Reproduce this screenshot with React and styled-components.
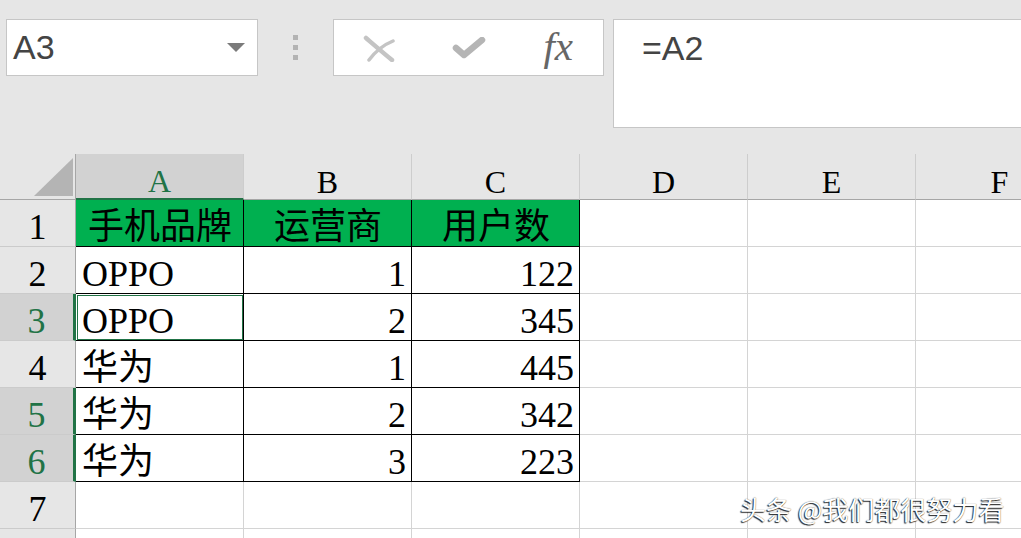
import React from "react";
import styled, { createGlobalStyle } from "styled-components";

const GlobalStyle = createGlobalStyle`
  html, body {
    margin: 0;
    padding: 0;
    background: #e6e6e6;
  }
`;

const columns = ["A", "B", "C", "D", "E", "F"];

const rows = [
  { cells: ["手机品牌", "运营商", "用户数"], head: true },
  { cells: ["OPPO", 1, 122] },
  { cells: ["OPPO", 2, 345] },
  { cells: ["华为", 1, 445] },
  { cells: ["华为", 2, 342] },
  { cells: ["华为", 3, 223] },
  { cells: [] },
  { cells: [], hideLabel: true },
];

const selectedRows = [3, 5, 6];
const activeRow = 3;

export default function App() {
  return (
    <Page>
      <GlobalStyle />
      <FormulaBar>
        <NameBox>
          A3
          <Caret />
        </NameBox>
        <Splitter>
          <Dot />
          <Dot />
          <Dot />
        </Splitter>
        <FnBox>
          <FnSlot>
            <svg width="32" height="28" viewBox="0 0 32 28">
              <path d="M3 4 C10 10 18 17 29 26" stroke="#c4c4c4" strokeWidth="4.5" strokeLinecap="round" fill="none" />
              <path d="M30 7 C20 11 12 18 6 26" stroke="#c4c4c4" strokeWidth="3.5" strokeLinecap="round" fill="none" />
            </svg>
          </FnSlot>
          <FnSlot>
            <svg width="34" height="22" viewBox="0 0 34 22">
              <polyline points="4,11 12,18 30,3" stroke="#b5b5b5" strokeWidth="6.5" strokeLinecap="round" strokeLinejoin="round" fill="none" />
            </svg>
          </FnSlot>
          <FnSlot>
            <FxLabel>fx</FxLabel>
          </FnSlot>
        </FnBox>
        <FormulaInput>=A2</FormulaInput>
      </FormulaBar>

      <Sheet>
        <Corner>
          <svg width="39" height="38" viewBox="0 0 39 38">
            <polygon points="39,0 39,38 0,38" fill="#b4b4b4" />
          </svg>
        </Corner>
        {columns.map((c) => (
          <ColHead key={c} $active={c === "A"}>
            {c}
          </ColHead>
        ))}
        {rows.map((row, r) => {
          const n = r + 1;
          return (
            <React.Fragment key={n}>
              <RowHead $active={selectedRows.includes(n)}>{row.hideLabel ? null : n}</RowHead>
              {columns.map((c, ci) => {
                const value = row.cells[ci];
                const boxed = n <= 6 && ci < 3;
                const align = row.head ? "center" : typeof value === "number" ? "flex-end" : "flex-start";
                return (
                  <Cell
                    key={c}
                    $boxed={boxed}
                    $fill={row.head && ci < 3 ? "#00b050" : undefined}
                    $align={align}
                    $active={n === activeRow && ci === 0}
                  >
                    {value}
                  </Cell>
                );
              })}
            </React.Fragment>
          );
        })}
      </Sheet>

      <Watermark>头条 @我们都很努力看</Watermark>
    </Page>
  );
}

const Page = styled.div`
  position: relative;
  width: 1021px;
  height: 538px;
  overflow: hidden;
  background: #e6e6e6;
`;

const FormulaBar = styled.div`
  display: flex;
  align-items: flex-start;
  box-sizing: border-box;
  height: 154px;
  padding: 19px 0 0 6px;
  font-family: "Liberation Sans", Arial, sans-serif;
  color: #444;
`;

const NameBox = styled.div`
  box-sizing: border-box;
  display: flex;
  align-items: center;
  justify-content: space-between;
  width: 252px;
  height: 57px;
  padding: 0 12px 0 6px;
  background: #fff;
  border: 1px solid #c6c6c6;
  font-size: 34px;
`;

const Caret = styled.span`
  width: 0;
  height: 0;
  border-left: 9px solid transparent;
  border-right: 9px solid transparent;
  border-top: 9px solid #7b7b7b;
`;

const Splitter = styled.div`
  display: flex;
  flex-direction: column;
  align-items: center;
  justify-content: center;
  gap: 5px;
  width: 75px;
  height: 57px;
`;

const Dot = styled.span`
  width: 5px;
  height: 5px;
  background: #b3b3b3;
`;

const FnBox = styled.div`
  box-sizing: border-box;
  display: flex;
  width: 271px;
  height: 57px;
  background: #fff;
  border: 1px solid #c6c6c6;
`;

const FnSlot = styled.div`
  flex: 1;
  display: flex;
  align-items: center;
  justify-content: center;
`;

const FxLabel = styled.span`
  font-family: "Liberation Serif", serif;
  font-style: italic;
  font-size: 41px;
  color: #666;
  line-height: 1;
  margin-top: -2px;
`;

const FormulaInput = styled.div`
  flex: 1;
  box-sizing: border-box;
  height: 109px;
  margin-left: 9px;
  padding: 9px 0 0 28px;
  background: #fff;
  border: 1px solid #c6c6c6;
  border-right: none;
  font-size: 34px;
  line-height: 38px;
`;

const Sheet = styled.div`
  display: grid;
  grid-template-columns: 76px repeat(6, 168px);
  grid-template-rows: 46px repeat(8, 47px);
  font-family: "Liberation Serif", "Noto Sans CJK SC", serif;
  color: #000;
`;

const Corner = styled.div`
  box-sizing: border-box;
  display: flex;
  align-items: flex-end;
  justify-content: flex-end;
  padding: 0 2px 3px 0;
  background: #e6e6e6;
  border-right: 1px solid #a6a6a6;
  border-bottom: 1px solid #a6a6a6;
`;

const ColHead = styled.div`
  box-sizing: border-box;
  display: flex;
  align-items: flex-end;
  justify-content: center;
  padding-bottom: 1px;
  background: ${(p) => (p.$active ? "#d2d2d2" : "#e6e6e6")};
  color: ${(p) => (p.$active ? "#217346" : "#000")};
  border-right: 1px solid #cdcdcd;
  border-bottom: ${(p) => (p.$active ? "2px solid #217346" : "1px solid #a6a6a6")};
  font-size: 32px;
  line-height: 1;
`;

const RowHead = styled.div`
  box-sizing: border-box;
  display: flex;
  align-items: flex-end;
  justify-content: center;
  padding-bottom: 1px;
  background: ${(p) => (p.$active ? "#d2d2d2" : "#e6e6e6")};
  color: ${(p) => (p.$active ? "#217346" : "#000")};
  border-right: ${(p) => (p.$active ? "3px solid #217346" : "1px solid #a6a6a6")};
  border-bottom: 1px solid #cbcbcb;
  font-size: 36px;
  line-height: 1;
`;

const Cell = styled.div`
  box-sizing: border-box;
  display: flex;
  align-items: flex-end;
  justify-content: ${(p) => p.$align};
  padding: 0 5px 1px 6px;
  background: ${(p) => p.$fill || "#fff"};
  border-right: 1px solid ${(p) => (p.$boxed ? "#000" : "#d4d4d4")};
  border-bottom: 1px solid ${(p) => (p.$boxed ? "#000" : "#d4d4d4")};
  outline: ${(p) => (p.$active ? "1px solid #217346" : "none")};
  outline-offset: -2px;
  font-size: 36px;
  line-height: 1;
  white-space: nowrap;
`;

const Watermark = styled.div`
  position: absolute;
  left: 740px;
  top: 493px;
  font-family: "Noto Sans CJK SC", "Noto Sans", sans-serif;
  font-size: 26px;
  line-height: 32px;
  color: #fff;
  text-shadow: -1px 1px 1px rgba(0, 0, 0, 0.85), 0 0 1px rgba(0, 0, 0, 0.7);
  white-space: nowrap;
`;
